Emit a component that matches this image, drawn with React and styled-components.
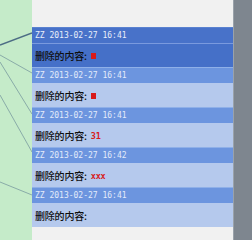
import React from 'react';
import styled, { createGlobalStyle } from 'styled-components';

const GlobalStyle = createGlobalStyle`
  html, body {
    margin: 0;
    padding: 0;
    background: #f0f0f0;
  }
`;

const Page = styled.div`
  display: flex;
  width: 252px;
  height: 240px;
  overflow: hidden;
`;

const Canvas = styled.div`
  width: 32px;
  flex: none;
  background: #c5ebc9;
`;

const ListPanel = styled.div`
  width: 201px;
  flex: none;
  background: #f1f1f1;
  padding-top: 27px;
  box-sizing: border-box;
  display: flex;
  flex-direction: column;
`;

const Scroll = styled.div`
  flex: 1;
  background: #7e868f;
  border-left: 1px solid #9aa2aa;
`;

const Header = styled.div`
  height: 16px;
  box-sizing: border-box;
  padding-left: 3px;
  display: flex;
  align-items: center;
  font-family: "DejaVu Sans Mono", monospace;
  font-size: 8px;
  color: ${p => (p.$active ? '#e8eefa' : '#e3ebfa')};
  background: ${p => (p.$active ? '#4872c9' : '#6c95df')};
  border-top: 1px solid ${p => (p.$active ? '#5a82d0' : '#8fb0e8')};
`;

const Body = styled.div`
  height: 24px;
  box-sizing: border-box;
  padding-left: 3px;
  display: flex;
  align-items: center;
  font-family: "Noto Sans CJK SC", sans-serif;
  font-size: 10px;
  font-weight: 500;
  letter-spacing: -0.2px;
  color: #0e0e0e;
  background: ${p => (p.$active ? '#4570c8' : '#b5c9ed')};
  border-top: 1px solid ${p => (p.$active ? '#7a9ade' : '#b5c9ed')};
`;

const Value = styled.span`
  margin-left: 4px;
  color: #d81a1a;
  font-family: "DejaVu Sans Mono", monospace;
  font-weight: bold;
  font-size: 8.5px;
`;

const Mark = styled.span`
  margin-left: 4px;
  width: 5px;
  height: 6px;
  background: #d81a1a;
`;

const items = [
  { time: '2013-02-27 16:41', mark: true, active: true },
  { time: '2013-02-27 16:41', mark: true },
  { time: '2013-02-27 16:41', value: '31' },
  { time: '2013-02-27 16:42', value: 'xxx' },
  { time: '2013-02-27 16:41' },
];

const links = [
  [45, 33, '#4d6d85', 1.5],
  [55, 73, '#82a4a4', 0.9],
  [62, 114, '#82a4a4', 0.9],
  [95, 152, '#82a4a4', 0.9],
  [182, 195, '#82a4a4', 0.9],
];

const App = () => (
  <>
    <GlobalStyle />
    <Page>
      <Canvas>
        <svg width="32" height="240">
          {links.map(([y1, y2, c, w], i) => (
            <line key={i} x1="0" y1={y1} x2="32" y2={y2} stroke={c} strokeWidth={w} />
          ))}
        </svg>
      </Canvas>
      <ListPanel>
        {items.map((it, i) => (
          <React.Fragment key={i}>
            <Header $active={it.active}>ZZ {it.time}</Header>
            <Body $active={it.active}>
              删除的内容:
              {it.mark && <Mark />}
              {it.value && <Value>{it.value}</Value>}
            </Body>
          </React.Fragment>
        ))}
      </ListPanel>
      <Scroll />
    </Page>
  </>
);

export default App;
